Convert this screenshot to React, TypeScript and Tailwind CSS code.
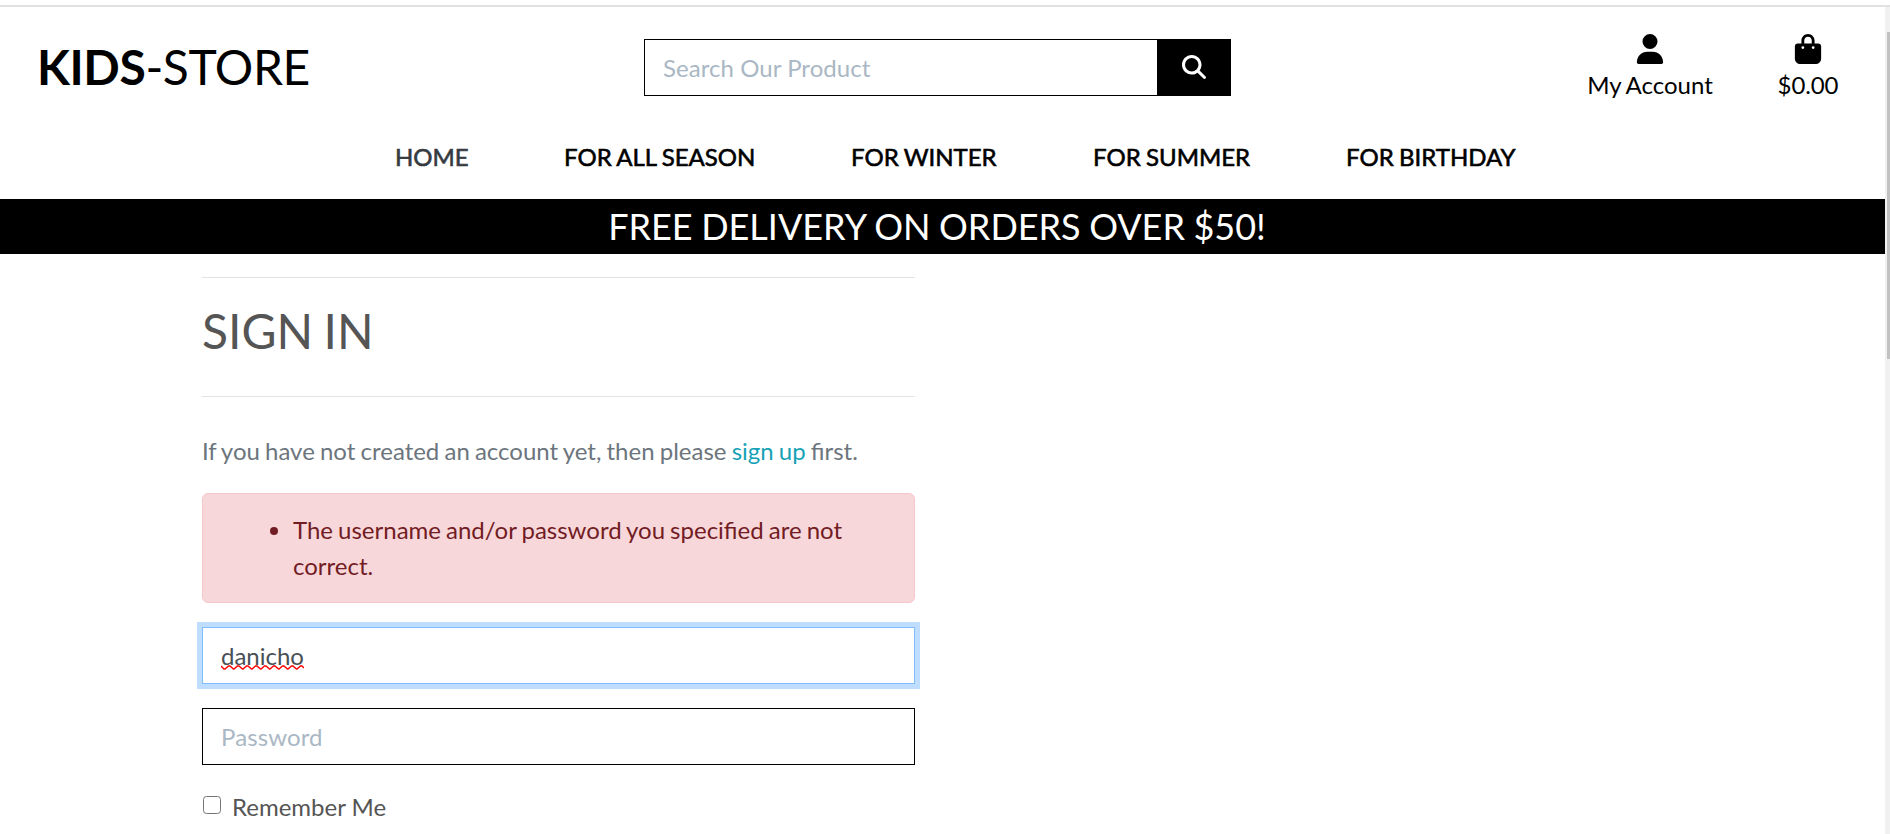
import React from "react";
import { FaBagShopping, FaMagnifyingGlass, FaUser } from "react-icons/fa6";

type NavItem = { label: string; className: string };

const navItems: NavItem[] = [
  { label: "HOME", className: "w-[73px] text-[#343a40]" },
  { label: "FOR ALL SEASON", className: "w-[191px] text-black" },
  { label: "FOR WINTER", className: "w-[146px] text-black" },
  { label: "FOR SUMMER", className: "w-[157px] text-black" },
  { label: "FOR BIRTHDAY", className: "w-[170px] text-black" },
];

function Header() {
  return (
    <header className="flex h-[192px] flex-col">
      <div className="flex h-[124px] items-start">
        <a href="#" className="mt-[31px] ml-[37px] w-[607px] text-[48px] leading-[58px] tracking-[-0.4px] text-black">
          <strong className="font-bold">KIDS</strong>-STORE
        </a>
        <form className="mt-8 flex h-[57px] w-[587px]">
          <input
            className="min-w-0 flex-1 border border-r-0 border-black bg-white px-[18px] text-[24px] tracking-[0.05px] text-[#495057] outline-none placeholder:text-[#aab7c4]"
            placeholder="Search Our Product"
          />
          <button type="button" className="flex w-[74px] items-center justify-center bg-black pr-px pb-px text-white">
            <FaMagnifyingGlass size={24} />
          </button>
        </form>
        <a href="#" className="mt-[27px] ml-[354px] flex w-[130px] flex-col items-center text-black">
          <FaUser size={30} />
          <span className="mt-[3px] text-[24px] leading-[36px] whitespace-nowrap [word-spacing:-0.8px]">My Account</span>
        </a>
        <a href="#" className="mt-[27px] ml-[61px] flex w-[64px] flex-col items-center text-black">
          <FaBagShopping size={30} />
          <span className="mt-[3px] text-[24px] leading-[36px] tracking-[-0.1px]">$0.00</span>
        </a>
      </div>
      <nav className="flex gap-24 pt-2 pl-[395px]">
        {navItems.map((item) => (
          <a
            key={item.label}
            href="#"
            className={`${item.className} text-[24px] leading-[36px] whitespace-nowrap [word-spacing:-0.8px] [-webkit-text-stroke:0.6px_currentColor]`}
          >
            {item.label}
          </a>
        ))}
      </nav>
    </header>
  );
}

function SignIn() {
  return (
    <main className="ml-[202px] flex w-[713px] flex-col pt-[23px] text-[24px] leading-[36px] text-[#555]">
      <hr className="border-t border-[#e2e2e2]" />
      <h1 className="mt-6 mb-9 text-[48px] leading-[58px] [word-spacing:-2px]">SIGN IN</h1>
      <hr className="border-t border-[#e2e2e2]" />
      <p className="mt-9 text-[#6c757d] [word-spacing:-1px]">
        If you have not created an account yet, then please{" "}
        <a href="#" className="text-[#17a2b8]">sign up</a> first.
      </p>
      <div className="mt-6 rounded-[6px] border border-[#f5c6cb] bg-[#f8d7da] px-[30px] py-[18px] text-[#721c24]">
        <ul className="list-disc pl-[60px] [word-spacing:-1.1px]">
          <li>The username and/or password you specified are not correct.</li>
        </ul>
      </div>
      <div className="mt-6 flex h-[57px] items-center border border-[#80bdff] bg-white px-[18px] text-[#495057] shadow-[0_0_0_5px_#bfdeff]">
        <span className="relative">
          danicho
          <svg className="absolute top-[27px] left-0" width="83" height="5" viewBox="0 0 83 5" fill="none">
            <path
              d="M0 1L3 4H4L7.5 1H9L12.5 4H13L16.5 1H18L21.5 4H22L25.5 1H27L30.5 4H31L34.5 1H36L39.5 4H40L43.5 1H45L48.5 4H49L52.5 1H54L57.5 4H58L61.5 1H63L66.5 4H67L70.5 1H72L75.5 4H76L79.5 1H81L83 3"
              stroke="#ff0000"
              strokeWidth="1.4"
            />
          </svg>
        </span>
      </div>
      <input
        type="password"
        placeholder="Password"
        className="mt-6 h-[57px] border border-black bg-white px-[18px] tracking-[0.1px] outline-none placeholder:text-[#aab7c4]"
      />
      <label className="mt-6 flex items-start">
        <input
          type="checkbox"
          className="mt-[7px] mr-[11px] ml-px size-[18px] appearance-none rounded-[3.5px] border-[1.5px] border-[#767676] bg-white"
        />
        Remember Me
      </label>
    </main>
  );
}

export default function App() {
  return (
    <div className="flex h-[834px] flex-col overflow-hidden bg-white pt-[5px] font-['Lato',sans-serif]">
      <div className="h-[2px] shrink-0 bg-[#e1e1e1]" />
      <div className="flex min-h-0 flex-1">
        <div className="w-[1885px] overflow-hidden">
          <Header />
          <div className="h-[55px] bg-black pr-[11px] text-center text-[36px] leading-[55px] text-white [word-spacing:-0.7px]">
            FREE DELIVERY ON ORDERS OVER $50!
          </div>
          <SignIn />
        </div>
        <div className="flex w-[5px] flex-col bg-[#f1f1f1] pt-[25px] pl-[2px]">
          <div className="h-[327px] bg-[#c1c1c1]" />
        </div>
      </div>
    </div>
  );
}
